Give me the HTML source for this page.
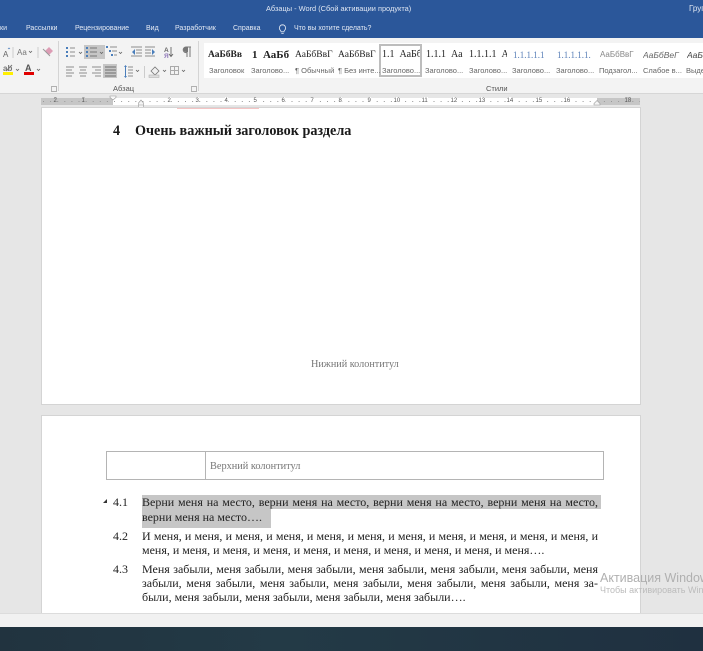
<!DOCTYPE html>
<html><head><meta charset="utf-8">
<style>
html,body{margin:0;padding:0}
body{width:703px;height:651px;overflow:hidden;position:relative;background:#e6e6e6;font-family:"Liberation Sans",sans-serif;filter:blur(.35px)}
.a{position:absolute;white-space:nowrap}
.tab{top:24px;font-size:7px;color:#e4eaf4;line-height:10px}
.s{font-family:"Liberation Serif",serif;color:#222;font-size:12px;line-height:14px;white-space:nowrap;position:absolute}
.st{top:49px;font-family:"Liberation Serif",serif;font-size:9.5px;line-height:12px;color:#222;overflow:hidden;white-space:nowrap;position:absolute}
.sl{top:66px;font-size:7.5px;line-height:10px;color:#666;white-space:nowrap;position:absolute}
.j{font-family:"Liberation Serif",serif;color:#222;font-size:12px;line-height:14px;position:absolute;white-space:nowrap;text-align:justify;text-align-last:justify;left:142px;width:456px}
.r{position:absolute;top:97px;font-size:6px;line-height:8px;color:#555}
</style></head><body>
<!-- title bar -->
<div class="a" style="left:0;top:0;width:703px;height:38px;background:#2b579a"></div>
<div class="a" style="left:266px;top:4px;font-size:7.4px;line-height:10px;color:#dfe6f2">Абзацы  -  Word (Сбой активации продукта)</div>
<div class="a" style="left:689px;top:4px;font-size:8px;line-height:10px;color:#dfe6f2">Груп</div>
<div class="a tab" style="left:0">ки</div>
<div class="a tab" style="left:26px">Рассылки</div>
<div class="a tab" style="left:75px">Рецензирование</div>
<div class="a tab" style="left:146px">Вид</div>
<div class="a tab" style="left:175px">Разработчик</div>
<div class="a tab" style="left:233px">Справка</div>
<svg class="a" style="left:277px;top:24px" width="11" height="11" viewBox="0 0 11 11"><path d="M5.500 .8a3.200 3.200 0 0 0-2 5.600c.4.4.5.8.5 1.400h3c0-.6.1-1 .5-1.400a3.200 3.200 0 0 0-2-5.600zM4.300 9.600h2.400" fill="none" stroke="#e4eaf4" stroke-width=".8"/></svg>
<div class="a tab" style="left:294px">Что вы хотите сделать?</div>
<!-- ribbon -->
<div class="a" style="left:0;top:38px;width:703px;height:56px;background:#f3f3f3"></div>
<div class="a" style="left:0;top:93px;width:703px;height:1px;background:#d6d6d6"></div>
<div class="a" style="left:58px;top:41px;width:1px;height:50px;background:#d4d4d4"></div>
<div class="a" style="left:198px;top:41px;width:1px;height:50px;background:#d4d4d4"></div>
<div class="a" style="left:84px;top:45px;width:21px;height:14px;background:#c6c6c6"></div>
<div class="a" style="left:103px;top:64px;width:14px;height:14px;background:#c6c6c6"></div>
<svg class="a" style="left:0;top:38px" width="200" height="54" viewBox="0 38 200 54">
 <!-- font group -->
 <text x="3" y="57" font-family="Liberation Sans" font-size="8" fill="#666">A</text>
 <path d="M8 49l1-1 1 1" fill="none" stroke="#4a7ebb" stroke-width=".7"/>
 <path d="M13 47v11M38 47v11" stroke="#ccc" stroke-width="1"/>
 <text x="17" y="55" font-family="Liberation Sans" font-size="8" fill="#777">Aa</text>
 <path d="M29 51l1.500 1.500L32 51" fill="none" stroke="#666" stroke-width=".8"/>
 <path d="M45 51l4-4 4 4-4 4z" fill="#dd9db5"/>
 <path d="M43 49l7 7" stroke="#999" stroke-width="1"/>
 <text x="3" y="71" font-family="Liberation Sans" font-size="8" font-weight="bold" fill="#777">ab</text>
 <path d="M6 71l6-6" stroke="#777" stroke-width="1"/>
 <rect x="3" y="72" width="10" height="3" fill="#ffef00"/>
 <path d="M16 69l1.500 1.500L19 69M37 69l1.500 1.500L40 69" fill="none" stroke="#666" stroke-width=".8"/>
 <text x="25" y="71" font-family="Liberation Sans" font-size="9" font-weight="bold" fill="#555">A</text>
 <rect x="24" y="72" width="10" height="3" fill="#e00000"/>
 <!-- row 1 -->
 <g fill="none" stroke="#8c8c8c" stroke-width="1">
  <path d="M70 48h5M70 52h5M70 56h5"/>
  <path d="M90 48h7M90 52h7M90 56h7" stroke="#777"/>
  <path d="M110 47h7M112 51h5M114 55h3"/>
  <path d="M131 47h11M136 50h6M136 53h6M131 56h11"/>
  <path d="M145 47h10M145 50h6M145 53h6M145 56h10"/>
  <path d="M79 52l1.500 1.500L82 52M100 52l1.500 1.500L103 52M119 52l1.500 1.500L122 52" stroke="#666" stroke-width=".8"/>
 </g>
 <g fill="#4a7ebb">
  <rect x="66" y="47" width="2" height="2"/><rect x="66" y="51" width="2" height="2"/><rect x="66" y="55" width="2" height="2"/>
  <rect x="86" y="47" width="2" height="2"/><rect x="86" y="51" width="2" height="2"/><rect x="86" y="55" width="2" height="2"/>
  <rect x="106" y="46" width="2" height="2"/><rect x="109" y="50" width="2" height="2"/><rect x="111" y="54" width="2" height="2"/>
  <path d="M135 49v6l-3-3zM152 49v6l3-3z"/>
 </g>
 <text x="164" y="52" font-family="Liberation Sans" font-size="6.500" font-weight="bold" fill="#666">A</text>
 <text x="164" y="58" font-family="Liberation Sans" font-size="6.500" font-weight="bold" fill="#8f78b8">Я</text>
 <path d="M171 47v9M169 54l2 2.500 2-2.500" fill="none" stroke="#666" stroke-width=".9"/>
 <path d="M187 47v10M190 47v10M191 47h-5a2.800 2.800 0 0 0 0 5.600h1" fill="none" stroke="#777" stroke-width="1"/>
 <path d="M186 47h2v5h-2a2.500 2.500 0 0 1 0-5z" fill="#777"/>
 <!-- row 2 -->
 <g fill="none" stroke="#8c8c8c" stroke-width="1">
  <path d="M66 67h8M66 70h6M66 73h8M66 76h6"/>
  <path d="M79 67h8M80 70h6M79 73h8M80 76h6"/>
  <path d="M92 67h9M95 70h6M92 73h9M95 76h6"/>
  <path d="M105 67h11M105 70h11M105 73h11M105 76h11" stroke="#6e6e6e"/>
  <path d="M128 67h5M128 70h5M128 73h5M128 76h5"/>
  <path d="M136 70l1.500 1.500L139 70M163 70l1.500 1.500L166 70M182 70l1.500 1.500L185 70" stroke="#666" stroke-width=".8"/>
  <path d="M144.500 66v12" stroke="#ccc"/>
  <path d="M170.500 66.500h8v8h-8zM174.500 66.500v8M170.500 70.500h8" stroke="#aaa"/>
 </g>
 <path d="M125.500 66v11" stroke="#4a7ebb" stroke-width="1"/>
 <path d="M124 67l1.500-2 1.500 2zM124 76l1.500 2 1.500-2z" fill="#4a7ebb"/>
 <path d="M151 71l4-4 4 4-4 4z" fill="#f0f0f0" stroke="#777" stroke-width=".8"/>
 <rect x="149" y="75" width="10" height="2.500" fill="#ddd" stroke="#aaa" stroke-width=".5"/>
</svg>
<div class="a" style="left:113px;top:84px;font-size:7.5px;line-height:10px;color:#555">Абзац</div>
<div class="a" style="left:486px;top:84px;font-size:7.5px;line-height:10px;color:#555">Стили</div>
<svg class="a" style="left:51px;top:86px" width="6" height="6"><path d="M.5.5h5v5h-5z" fill="none" stroke="#999" stroke-width=".7"/></svg>
<svg class="a" style="left:191px;top:86px" width="6" height="6"><path d="M.5.5h5v5h-5z" fill="none" stroke="#999" stroke-width=".7"/></svg>
<!-- styles gallery -->
<div class="a" style="left:204px;top:43px;width:499px;height:35px;background:#fff"></div>
<div class="a" style="left:379px;top:44px;width:43px;height:33px;border:2px solid #bdbdbd;box-sizing:border-box"></div>
<div class="st" style="left:208px;width:37px;font-weight:bold">АаБбВв</div>
<div class="st" style="left:252px;width:37px;font-weight:bold;font-size:11px">1&nbsp; АаБб</div>
<div class="st" style="left:295px;width:38px">АаБбВвГ</div>
<div class="st" style="left:338px;width:38px">АаБбВвГ</div>
<div class="st" style="left:382px;width:38px;font-size:10px">1.1&nbsp; АаБб</div>
<div class="st" style="left:426px;width:38px;font-size:10px">1.1.1&nbsp; Аа</div>
<div class="st" style="left:469px;width:38px;font-size:10px">1.1.1.1&nbsp; А</div>
<div class="st" style="left:513px;width:38px;color:#5a80b8;font-size:9px">1.1.1.1.1</div>
<div class="st" style="left:557px;width:38px;color:#5a80b8;font-size:9px">1.1.1.1.1.</div>
<div class="st" style="left:600px;width:38px;color:#888;font-family:'Liberation Sans';font-size:8px">АаБбВвГ</div>
<div class="st" style="left:643px;width:38px;color:#666;font-family:'Liberation Sans';font-size:8.5px;font-style:italic">АаБбВеГ</div>
<div class="st" style="left:687px;width:20px;color:#444;font-family:'Liberation Sans';font-size:8.5px;font-style:italic">АаБ</div>
<div class="sl" style="left:209px">Заголовок</div>
<div class="sl" style="left:251px">Заголово...</div>
<div class="sl" style="left:295px">¶ Обычный</div>
<div class="sl" style="left:338px">¶ Без инте...</div>
<div class="sl" style="left:382px">Заголово...</div>
<div class="sl" style="left:425px">Заголово...</div>
<div class="sl" style="left:469px">Заголово...</div>
<div class="sl" style="left:512px">Заголово...</div>
<div class="sl" style="left:556px">Заголово...</div>
<div class="sl" style="left:599px">Подзагол...</div>
<div class="sl" style="left:643px">Слабое в...</div>
<div class="sl" style="left:686px">Выдел</div>
<!-- ruler -->
<div class="a" style="left:0;top:94px;width:703px;height:14px;background:#e6e6e6"></div>
<div class="a" style="left:41px;top:98px;width:599px;height:7px;background:#c6c6c6"></div>
<div class="a" style="left:113px;top:98px;width:484px;height:7px;background:#fff"></div>
<svg class="a" style="left:0;top:94px" width="703" height="16" viewBox="0 94 703 16">
 <path d="M43 101.500H640" stroke="#999" stroke-width="1" stroke-dasharray="1 6.100" fill="none"/>
 <path d="M110 96h6v1.500l-3 2.500-3-2.500z" fill="#f8f8f8" stroke="#999" stroke-width=".6"/>
 <path d="M138.500 103l2.500-3 2.500 3v2h-5zM138.500 105h5v4h-5z" fill="#f4f4f4" stroke="#999" stroke-width=".6"/>
 <path d="M594 105v-1.500l3-3 3 3v1.500z" fill="#f4f4f4" stroke="#999" stroke-width=".6"/>
</svg>
<div class="r" style="left:53.500px;background:#c6c6c6">2</div><div class="r" style="left:81.500px;background:#c6c6c6">1</div><div class="r" style="left:167.500px;background:#fff">2</div><div class="r" style="left:195.500px;background:#fff">3</div><div class="r" style="left:224.500px;background:#fff">4</div><div class="r" style="left:253.500px;background:#fff">5</div><div class="r" style="left:281.500px;background:#fff">6</div><div class="r" style="left:310.500px;background:#fff">7</div><div class="r" style="left:338.500px;background:#fff">8</div><div class="r" style="left:367.500px;background:#fff">9</div><div class="r" style="left:393.500px;background:#fff">10</div><div class="r" style="left:421.500px;background:#fff">11</div><div class="r" style="left:450.500px;background:#fff">12</div><div class="r" style="left:478.500px;background:#fff">13</div><div class="r" style="left:506.500px;background:#fff">14</div><div class="r" style="left:535.500px;background:#fff">15</div><div class="r" style="left:563.500px;background:#fff">16</div><div class="r" style="left:624.500px;background:#c6c6c6">18</div>
<!-- page 1 -->
<div class="a" style="left:42px;top:108px;width:598px;height:296px;background:#fff;box-shadow:0 0 0 1px #d4d4d4"></div>
<div class="a" style="left:177px;top:108px;width:82px;height:1px;background:#f4c4c4"></div>
<div class="a" style="left:113px;top:124px;font-family:'Liberation Serif',serif;font-weight:bold;font-size:14.2px;line-height:15px;color:#1a1a1a">4</div>
<div class="a" style="left:135px;top:124px;font-family:'Liberation Serif',serif;font-weight:bold;font-size:14.2px;line-height:15px;color:#1a1a1a">Очень важный заголовок раздела</div>
<div class="a" style="left:311px;top:358px;font-family:'Liberation Serif',serif;font-size:10.2px;line-height:14px;color:#777">Нижний колонтитул</div>
<!-- page 2 -->
<div class="a" style="left:42px;top:416px;width:598px;height:197px;background:#fff;box-shadow:0 0 0 1px #d4d4d4"></div>
<div class="a" style="left:106px;top:451px;width:498px;height:29px;box-sizing:border-box;border:1px solid #b4b4b4"></div>
<div class="a" style="left:205px;top:451px;width:1px;height:29px;background:#b4b4b4"></div>
<div class="a" style="left:210px;top:460px;font-family:'Liberation Serif',serif;font-size:10.3px;line-height:14px;color:#777">Верхний колонтитул</div>
<div class="a" style="left:142px;top:495px;width:459px;height:14px;background:#c6c6c6"></div>
<div class="a" style="left:142px;top:509px;width:129px;height:19px;background:#c6c6c6"></div>
<svg class="a" style="left:102px;top:498px" width="6" height="6"><path d="M5 1v4H1z" fill="#333"/></svg>
<div class="s" style="left:113px;top:495px">4.1</div>
<div class="j" style="top:495px">Верни меня на место, верни меня на место, верни меня на место, верни меня на место,</div>
<div class="s" style="left:142px;top:510px">верни меня на место….</div>
<div class="s" style="left:113px;top:529px">4.2</div>
<div class="j" style="top:529px">И меня, и меня, и меня, и меня, и меня, и меня, и меня, и меня, и меня, и меня, и меня, и</div>
<div class="s" style="left:142px;top:543px">меня, и меня, и меня, и меня, и меня, и меня, и меня, и меня, и меня, и меня….</div>
<div class="s" style="left:113px;top:562px">4.3</div>
<div class="j" style="top:562px">Меня забыли, меня забыли, меня забыли, меня забыли, меня забыли, меня забыли, меня</div>
<div class="j" style="top:576px">забыли, меня забыли, меня забыли, меня забыли, меня забыли, меня забыли, меня за-</div>
<div class="s" style="left:142px;top:590px">были, меня забыли, меня забыли, меня забыли, меня забыли….</div>
<!-- watermark -->
<div class="a" style="left:600px;top:571px;font-size:12.500px;line-height:14px;color:#b0b0b0">Активация Windows</div>
<div class="a" style="left:600px;top:585px;font-size:9px;line-height:11px;color:#bcbcbc">Чтобы активировать Windows</div>
<!-- status & taskbar -->
<div class="a" style="left:0;top:613px;width:703px;height:1px;background:#dcdcdc"></div>
<div class="a" style="left:0;top:614px;width:703px;height:13px;background:#f1f1f1"></div>
<div class="a" style="left:0;top:627px;width:703px;height:24px;background:linear-gradient(90deg,#21333f,#233a46 40%,#1f3040)"></div>
</body></html>
